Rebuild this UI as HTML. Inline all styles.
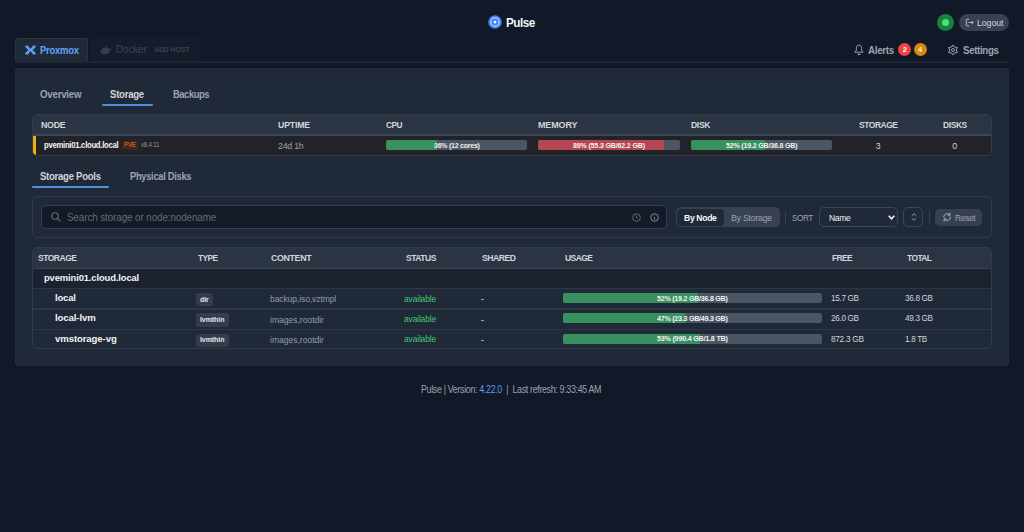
<!DOCTYPE html>
<html><head><meta charset="utf-8">
<style>
*{box-sizing:border-box;margin:0;padding:0}
html,body{width:1024px;height:532px;overflow:hidden}
body{background:#111827;font-family:"Liberation Sans",sans-serif;color:#e5e7eb;position:relative}
.a{position:absolute;white-space:nowrap}
.t{line-height:1}
svg.a{overflow:visible}
</style></head><body>
<svg class="a" style="left:488px;top:15px" width="14" height="14" viewBox="0 0 14 14"><circle cx="7" cy="7" r="6.8" fill="#3b82f6"/><circle cx="7" cy="7" r="4.2" fill="none" stroke="#dbeafe" stroke-width="1.1"/><circle cx="7" cy="7" r="1.5" fill="#eff6ff"/></svg>
<div class="a t" style="left:505.60px;top:16.40px;font-size:13px;font-weight:bold;color:#f3f4f6;letter-spacing:-0.555px;transform:scaleX(0.9056);transform-origin:0 0;">Pulse</div>
<div class="a" style="left:937px;top:14px;width:17px;height:17px;background:#1a803e;border-radius:50%"></div>
<div class="a" style="left:942px;top:19px;width:7px;height:7px;background:#4ade80;border-radius:50%"></div>
<div class="a" style="left:959.4px;top:14.2px;width:49.2px;height:16.8px;background:#374151;border-radius:9px"></div>
<svg class="a" style="left:965px;top:18px" width="9" height="9" viewBox="0 0 9 9" fill="none" stroke="#c4cad3" stroke-width="0.9"><path d="M4 1.2H2.2a.9.9 0 0 0-.9.9v4.8a.9.9 0 0 0 .9.9H4"/><path d="M3.6 4.5h4.6M6.6 2.9l1.6 1.6-1.6 1.6"/></svg>
<div class="a t" style="left:976.60px;top:19.18px;font-size:9px;color:#d1d5db;letter-spacing:-0.091px;transform:scaleX(0.9752);transform-origin:0 0;">Logout</div>
<div class="a" style="left:15.3px;top:38px;width:73px;height:25px;background:#1f2937;border:1px solid #2b3544;border-bottom:none;border-radius:3px 3px 0 0"></div>
<svg class="a" style="left:24.5px;top:44.8px" width="11" height="10" viewBox="0 0 11 10"><g stroke="#60a5fa" fill="none" stroke-linecap="round"><path d="M2.2 0.9L8.8 9.1M8.8 0.9L2.2 9.1" stroke-width="1.5"/><path d="M0.8 1.6L4.3 5 0.8 8.4M10.2 1.6L6.7 5l3.5 3.4" stroke-width="1.4"/></g></svg>
<div class="a t" style="left:39.70px;top:45.64px;font-size:10px;font-weight:bold;color:#60a5fa;letter-spacing:-0.260px;transform:scaleX(0.9458);transform-origin:0 0;">Proxmox</div>
<div class="a" style="left:90.3px;top:38px;width:109.7px;height:23px;background:#151c2a;border-radius:3px 3px 0 0"></div>
<svg class="a" style="left:99.5px;top:44.8px" width="11.5" height="9.5" viewBox="0 0 11.5 9.5"><path d="M0.2 5.2C0.2 8 2.3 9.3 4.6 9.3c3 0 5-1.6 5.6-3.9.6-.1 1.1-.5 1.3-1.1-.4-.3-1.1-.4-1.7-.1-.2-.6-.6-1-1-1.2l-.3.4V2.8H6.8V0.3H5.6v2.5H2.5v2.4z" fill="#353e4c"/></svg>
<div class="a t" style="left:115.50px;top:45.03px;font-size:10px;color:#3c4655;letter-spacing:-0.071px;transform:scaleX(0.9833);transform-origin:0 0;">Docker</div>
<div class="a t" style="left:154.00px;top:46.74px;font-size:6.8px;font-weight:bold;color:#394352;letter-spacing:-0.012px;transform:scaleX(0.9964);transform-origin:0 0;">ADD HOST</div>
<svg class="a" style="left:853.5px;top:43.6px" width="10" height="12" viewBox="0 0 10 12" fill="none" stroke="#9ca3af" stroke-width="1" stroke-linejoin="round"><path d="M5 1C2.9 1 2.4 2.8 2.4 4.4V6.2L0.9 8.2H9.1L7.6 6.2V4.4C7.6 2.8 7.1 1 5 1z"/><path d="M4 10.4H6" stroke-width="1.1" stroke-linecap="round"/></svg>
<div class="a t" style="left:868.30px;top:44.66px;font-size:10.8px;font-weight:bold;color:#9ca3af;letter-spacing:-0.378px;transform:scaleX(0.9088);transform-origin:0 0;">Alerts</div>
<div class="a" style="left:898.3px;top:43.3px;width:13px;height:13px;background:#ef4444;border-radius:50%"></div>
<div class="a t" style="left:902.71px;top:46.15px;font-size:7.5px;font-weight:bold;color:#fff;letter-spacing:0.000px;">2</div>
<div class="a" style="left:913.6px;top:43.3px;width:13px;height:13px;background:#d68a12;border-radius:50%"></div>
<div class="a t" style="left:918.01px;top:46.15px;font-size:7.5px;font-weight:bold;color:#fef3c7;letter-spacing:0.000px;">4</div>
<svg class="a" style="left:947px;top:43.6px" width="12" height="12" viewBox="0 0 12 12" fill="none" stroke="#9ca3af" stroke-width="1" stroke-linejoin="round"><polygon points="6.00,1.00 7.65,3.14 10.33,3.50 9.30,6.00 10.33,8.50 7.65,8.86 6.00,11.00 4.35,8.86 1.67,8.50 2.70,6.00 1.67,3.50 4.35,3.14"/><circle cx="6" cy="6" r="1.5"/></svg>
<div class="a t" style="left:963.20px;top:44.66px;font-size:10.8px;font-weight:bold;color:#9ca3af;letter-spacing:-0.397px;transform:scaleX(0.9039);transform-origin:0 0;">Settings</div>
<div class="a" style="left:15px;top:61px;width:994px;height:2px;background:#1e2636;"></div>
<div class="a" style="left:15.2px;top:67.6px;width:993.6px;height:298.2px;background:#1f2937;border-radius:2.5px;border:1px solid #222c3b;box-shadow:0 0 2px rgba(0,0,0,0.2)"></div>
<div class="a t" style="left:39.90px;top:90.08px;font-size:10.3px;font-weight:bold;color:#9ca3af;letter-spacing:-0.253px;transform:scaleX(0.9425);transform-origin:0 0;">Overview</div>
<div class="a t" style="left:110.10px;top:90.08px;font-size:10.3px;font-weight:bold;color:#d1d5db;letter-spacing:-0.290px;transform:scaleX(0.9328);transform-origin:0 0;">Storage</div>
<div class="a t" style="left:172.50px;top:90.08px;font-size:10.3px;font-weight:bold;color:#9ca3af;letter-spacing:-0.450px;transform:scaleX(0.9072);transform-origin:0 0;">Backups</div>
<div class="a" style="left:101.6px;top:104px;width:51.4px;height:2px;background:#5590e0;border-radius:1px"></div>
<div class="a" style="left:32px;top:113.8px;width:959.5px;height:42px;border:1px solid #323c4b;border-radius:5px;background:#2a3443;overflow:hidden"><div class="a" style="left:0;top:19.7px;width:958px;height:1.2px;background:#3b4554"></div><div class="a" style="left:0;top:20.9px;width:958px;height:19.3px;background:#212328"></div><div class="a" style="left:0;top:20.9px;width:3px;height:19.3px;background:#eab308"></div></div>
<div class="a t" style="left:41.00px;top:120.61px;font-size:9.2px;font-weight:bold;color:#d1d5db;letter-spacing:-0.249px;transform:scaleX(0.9581);transform-origin:0 0;">NODE</div>
<div class="a t" style="left:278.10px;top:120.61px;font-size:9.2px;font-weight:bold;color:#d1d5db;letter-spacing:-0.213px;transform:scaleX(0.9543);transform-origin:0 0;">UPTIME</div>
<div class="a t" style="left:385.50px;top:120.61px;font-size:9.2px;font-weight:bold;color:#d1d5db;letter-spacing:-0.614px;transform:scaleX(0.9067);transform-origin:0 0;">CPU</div>
<div class="a t" style="left:538.00px;top:120.61px;font-size:9.2px;font-weight:bold;color:#d1d5db;letter-spacing:-0.126px;transform:scaleX(0.9770);transform-origin:0 0;">MEMORY</div>
<div class="a t" style="left:691.00px;top:120.61px;font-size:9.2px;font-weight:bold;color:#d1d5db;letter-spacing:-0.343px;transform:scaleX(0.9307);transform-origin:0 0;">DISK</div>
<div class="a t" style="left:858.90px;top:120.61px;font-size:9.2px;font-weight:bold;color:#d1d5db;letter-spacing:-0.441px;transform:scaleX(0.9138);transform-origin:0 0;">STORAGE</div>
<div class="a t" style="left:942.60px;top:120.61px;font-size:9.2px;font-weight:bold;color:#d1d5db;letter-spacing:-0.409px;transform:scaleX(0.9139);transform-origin:0 0;">DISKS</div>
<div class="a t" style="left:43.90px;top:141.22px;font-size:8.6px;font-weight:bold;color:#f3f4f6;letter-spacing:-0.309px;transform:scaleX(0.8980);transform-origin:0 0;">pvemini01.cloud.local</div>
<div class="a" style="left:121.75px;top:140.5px;width:16.25px;height:9.2px;background:#3a2722;border-radius:2px"></div>
<div class="a t" style="left:123.90px;top:141.84px;font-size:6.8px;color:#f97316;letter-spacing:-0.334px;transform:scaleX(0.9274);transform-origin:0 0;">PVE</div>
<div class="a t" style="left:140.75px;top:141.84px;font-size:6.8px;color:#8b93a0;letter-spacing:-0.231px;transform:scaleX(0.9062);transform-origin:0 0;">v8.4.11</div>
<div class="a t" style="left:277.75px;top:141.53px;font-size:9.3px;color:#9ca3af;letter-spacing:-0.222px;transform:scaleX(0.9420);transform-origin:0 0;">24d 1h</div>
<div class="a" style="left:386px;top:140.25px;width:141px;height:9.75px;background:#4b5563;border-radius:2px"></div>
<div class="a" style="left:386px;top:140.25px;width:50.76px;height:9.75px;background:#3a9160;border-radius:2px 0 0 2px"></div>
<div class="a t" style="left:433.55px;top:141.95px;font-size:7.5px;font-weight:bold;color:#f3f4f6;letter-spacing:-0.212px;transform:scaleX(0.9222);transform-origin:0 0;font-weight:600">36% (12 cores)</div>
<div class="a" style="left:538px;top:140.25px;width:141.5px;height:9.75px;background:#4b5563;border-radius:2px"></div>
<div class="a" style="left:538px;top:140.25px;width:125.94px;height:9.75px;background:#b4474f;border-radius:2px 0 0 2px"></div>
<div class="a t" style="left:572.75px;top:141.95px;font-size:7.5px;font-weight:bold;color:#f3f4f6;letter-spacing:-0.166px;transform:scaleX(0.9385);transform-origin:0 0;font-weight:600">89% (55.3 GB/62.2 GB)</div>
<div class="a" style="left:691px;top:140.25px;width:141.4px;height:9.75px;background:#4b5563;border-radius:2px"></div>
<div class="a" style="left:691px;top:140.25px;width:73.53px;height:9.75px;background:#3a9160;border-radius:2px 0 0 2px"></div>
<div class="a t" style="left:725.90px;top:141.95px;font-size:7.5px;font-weight:bold;color:#f3f4f6;letter-spacing:-0.174px;transform:scaleX(0.9354);transform-origin:0 0;font-weight:600">52% (19.2 GB/36.8 GB)</div>
<div class="a t" style="left:875.85px;top:141.95px;font-size:8.8px;color:#d1d5db;letter-spacing:0.000px;">3</div>
<div class="a t" style="left:952.35px;top:141.95px;font-size:8.8px;color:#d1d5db;letter-spacing:0.000px;">0</div>
<div class="a t" style="left:40.40px;top:172.18px;font-size:10.3px;font-weight:bold;color:#d1d5db;letter-spacing:-0.286px;transform:scaleX(0.9267);transform-origin:0 0;">Storage Pools</div>
<div class="a t" style="left:129.50px;top:172.18px;font-size:10.3px;font-weight:bold;color:#9ca3af;letter-spacing:-0.343px;transform:scaleX(0.9087);transform-origin:0 0;">Physical Disks</div>
<div class="a" style="left:32px;top:186.1px;width:77.4px;height:2px;background:#5590e0;border-radius:1px"></div>
<div class="a" style="left:32px;top:196.2px;width:959.5px;height:42.2px;background:transparent;border:1px solid #2f3947;border-radius:5px"></div>
<div class="a" style="left:41.2px;top:205.1px;width:625.5px;height:23.6px;background:#131a28;border:1px solid #353f4e;border-radius:5px"></div>
<svg class="a" style="left:50.5px;top:212.3px" width="10" height="10" viewBox="0 0 10 10" fill="none" stroke="#6b7280" stroke-width="1.1"><circle cx="4" cy="4" r="3.2"/><path d="M6.4 6.4L9.3 9.3"/></svg>
<div class="a t" style="left:66.90px;top:212.63px;font-size:10px;color:#656c79;letter-spacing:-0.072px;transform:scaleX(0.9791);transform-origin:0 0;">Search storage or node:nodename</div>
<svg class="a" style="left:631.8px;top:213px" width="9" height="9" viewBox="0 0 9 9" fill="none" stroke="#6b7280" stroke-width="0.9"><circle cx="4.5" cy="4.5" r="3.8"/><path d="M4.5 2.4v2.2l1.4 1"/></svg>
<svg class="a" style="left:649.8px;top:213px" width="9" height="9" viewBox="0 0 9 9" fill="none" stroke="#8f96a2" stroke-width="0.9"><circle cx="4.5" cy="4.5" r="3.8"/><path d="M4.5 4.2v2.4"/><circle cx="4.5" cy="2.7" r="0.45" fill="#8f96a2" stroke="none"/></svg>
<div class="a" style="left:675.75px;top:207.25px;width:104px;height:19.65px;background:#374151;border-radius:5px"></div>
<div class="a" style="left:677px;top:208.75px;width:46.9px;height:16.85px;background:#1f2937;border-radius:4px"></div>
<div class="a t" style="left:684.10px;top:213.06px;font-size:9.5px;font-weight:bold;color:#f9fafb;letter-spacing:-0.393px;transform:scaleX(0.9095);transform-origin:0 0;">By Node</div>
<div class="a t" style="left:730.75px;top:213.06px;font-size:9.5px;color:#9ca3af;letter-spacing:-0.266px;transform:scaleX(0.9247);transform-origin:0 0;">By Storage</div>
<div class="a" style="left:785.1px;top:210.6px;width:1px;height:13px;background:#374151;"></div>
<div class="a t" style="left:791.80px;top:214.08px;font-size:9px;color:#9ca3af;letter-spacing:-0.508px;transform:scaleX(0.9094);transform-origin:0 0;">SORT</div>
<div class="a" style="left:819px;top:207.1px;width:78.75px;height:19.8px;background:#1f2937;border:1px solid #3d4757;border-radius:5px"></div>
<div class="a t" style="left:828.75px;top:214.08px;font-size:9px;color:#f3f4f6;letter-spacing:-0.296px;transform:scaleX(0.9451);transform-origin:0 0;">Name</div>
<svg class="a" style="left:888px;top:215px" width="7" height="5" viewBox="0 0 7 5" fill="none" stroke="#f3f4f6" stroke-width="1.6"><path d="M0.7 0.8L3.5 3.8 6.3 0.8"/></svg>
<div class="a" style="left:903.1px;top:207px;width:20px;height:20px;background:transparent;border:1px solid #3d4757;border-radius:5px"></div>
<svg class="a" style="left:910.6px;top:213.3px" width="6" height="8" viewBox="0 0 6 8" fill="none" stroke="#9ca3af" stroke-width="0.9"><path d="M0.8 2.8L3 0.7 5.2 2.8M0.8 5.2L3 7.3 5.2 5.2"/></svg>
<div class="a" style="left:928.7px;top:210px;width:1px;height:14px;background:#374151;"></div>
<div class="a" style="left:934.9px;top:208.8px;width:47.5px;height:17px;background:#364050;border-radius:5px"></div>
<svg class="a" style="left:941.7px;top:212.3px" width="10.2" height="10.2" viewBox="0 0 24 24" fill="none" stroke="#aeb4bd" stroke-width="2.2" stroke-linecap="round"><path d="M20 12a8 8 0 0 1-14.5 4.7M4 12A8 8 0 0 1 18.5 7.3"/><path d="M19 2.5v5h-5M5 21.5v-5h5"/></svg>
<div class="a t" style="left:954.70px;top:213.93px;font-size:9.3px;color:#9ca3af;letter-spacing:-0.393px;transform:scaleX(0.9044);transform-origin:0 0;">Reset</div>
<div class="a" style="left:32px;top:246.8px;width:959.5px;height:102.2px;border:1px solid #313b4a;border-radius:5px;background:#1f2937;overflow:hidden"><div class="a" style="left:0;top:0;width:958px;height:20px;background:#2a3443"></div><div class="a" style="left:0;top:20px;width:958px;height:1.5px;background:#3b4554"></div><div class="a" style="left:0;top:21.5px;width:958px;height:18.8px;background:#1b2230"></div><div class="a" style="left:0;top:40.3px;width:958px;height:1.2px;background:#2d3746"></div><div class="a" style="left:0;top:60.6px;width:958px;height:1.2px;background:#2d3746"></div><div class="a" style="left:0;top:81px;width:958px;height:1.2px;background:#2d3746"></div></div>
<div class="a t" style="left:38.00px;top:252.77px;font-size:9.6px;font-weight:bold;color:#d1d5db;letter-spacing:-0.585px;transform:scaleX(0.8907);transform-origin:0 0;">STORAGE</div>
<div class="a t" style="left:198.10px;top:252.77px;font-size:9.6px;font-weight:bold;color:#d1d5db;letter-spacing:-0.723px;transform:scaleX(0.8731);transform-origin:0 0;">TYPE</div>
<div class="a t" style="left:271.25px;top:252.77px;font-size:9.6px;font-weight:bold;color:#d1d5db;letter-spacing:-0.402px;transform:scaleX(0.9230);transform-origin:0 0;">CONTENT</div>
<div class="a t" style="left:405.80px;top:252.77px;font-size:9.6px;font-weight:bold;color:#d1d5db;letter-spacing:-0.548px;transform:scaleX(0.8909);transform-origin:0 0;">STATUS</div>
<div class="a t" style="left:482.20px;top:252.77px;font-size:9.6px;font-weight:bold;color:#d1d5db;letter-spacing:-0.551px;transform:scaleX(0.8999);transform-origin:0 0;">SHARED</div>
<div class="a t" style="left:564.70px;top:252.77px;font-size:9.6px;font-weight:bold;color:#d1d5db;letter-spacing:-0.651px;transform:scaleX(0.8879);transform-origin:0 0;">USAGE</div>
<div class="a t" style="left:832.20px;top:252.77px;font-size:9.6px;font-weight:bold;color:#d1d5db;letter-spacing:-0.726px;transform:scaleX(0.8751);transform-origin:0 0;">FREE</div>
<div class="a t" style="left:906.60px;top:252.77px;font-size:9.6px;font-weight:bold;color:#d1d5db;letter-spacing:-0.651px;transform:scaleX(0.8771);transform-origin:0 0;">TOTAL</div>
<div class="a t" style="left:43.90px;top:272.69px;font-size:9.7px;font-weight:bold;color:#f3f4f6;letter-spacing:-0.111px;transform:scaleX(0.9672);transform-origin:0 0;">pvemini01.cloud.local</div>
<div class="a t" style="left:55.10px;top:292.92px;font-size:9.9px;font-weight:bold;color:#f3f4f6;letter-spacing:-0.170px;transform:scaleX(0.9552);transform-origin:0 0;">local</div>
<div class="a" style="left:196.25px;top:293.0px;width:17px;height:13.3px;background:#343d4b;border-radius:3px"></div>
<div class="a t" style="left:200.35px;top:295.61px;font-size:7.2px;font-weight:bold;color:#e5e7eb;letter-spacing:-0.081px;transform:scaleX(0.9737);transform-origin:0 0;">dir</div>
<div class="a t" style="left:270.20px;top:295.32px;font-size:8.6px;color:#959ca8;letter-spacing:-0.054px;transform:scaleX(0.9810);transform-origin:0 0;">backup,iso,vztmpl</div>
<div class="a t" style="left:404.10px;top:294.68px;font-size:9px;color:#42c872;letter-spacing:-0.174px;transform:scaleX(0.9419);transform-origin:0 0;">available</div>
<div class="a" style="left:481px;top:299.3px;width:3px;height:1px;background:#9ca3af;"></div>
<div class="a" style="left:563px;top:293.0px;width:259px;height:10px;background:#4b5563;border-radius:2px"></div>
<div class="a" style="left:563px;top:293.0px;width:134.68px;height:10px;background:#3a9160;border-radius:2px 0 0 2px"></div>
<div class="a t" style="left:657.05px;top:294.50px;font-size:7.8px;font-weight:bold;color:#f3f4f6;letter-spacing:-0.259px;transform:scaleX(0.9082);transform-origin:0 0;font-weight:600">52% (19.2 GB/36.8 GB)</div>
<div class="a t" style="left:831.30px;top:294.08px;font-size:9px;color:#d1d5db;letter-spacing:-0.351px;transform:scaleX(0.9058);transform-origin:0 0;">15.7 GB</div>
<div class="a t" style="left:905.40px;top:294.08px;font-size:9px;color:#d1d5db;letter-spacing:-0.351px;transform:scaleX(0.9058);transform-origin:0 0;">36.8 GB</div>
<div class="a t" style="left:55.10px;top:313.22px;font-size:9.9px;font-weight:bold;color:#f3f4f6;letter-spacing:-0.102px;transform:scaleX(0.9715);transform-origin:0 0;">local-lvm</div>
<div class="a" style="left:196.25px;top:313.3px;width:32.25px;height:13.3px;background:#343d4b;border-radius:3px"></div>
<div class="a t" style="left:200.12px;top:315.91px;font-size:7.2px;font-weight:bold;color:#e5e7eb;letter-spacing:-0.074px;transform:scaleX(0.9740);transform-origin:0 0;">lvmthin</div>
<div class="a t" style="left:270.20px;top:315.62px;font-size:8.6px;color:#959ca8;letter-spacing:-0.015px;transform:scaleX(0.9946);transform-origin:0 0;">images,rootdir</div>
<div class="a t" style="left:404.10px;top:314.98px;font-size:9px;color:#42c872;letter-spacing:-0.174px;transform:scaleX(0.9419);transform-origin:0 0;">available</div>
<div class="a" style="left:481px;top:319.6px;width:3px;height:1px;background:#9ca3af;"></div>
<div class="a" style="left:563px;top:313.3px;width:259px;height:10px;background:#4b5563;border-radius:2px"></div>
<div class="a" style="left:563px;top:313.3px;width:121.73px;height:10px;background:#3a9160;border-radius:2px 0 0 2px"></div>
<div class="a t" style="left:657.05px;top:314.80px;font-size:7.8px;font-weight:bold;color:#f3f4f6;letter-spacing:-0.259px;transform:scaleX(0.9082);transform-origin:0 0;font-weight:600">47% (23.3 GB/49.3 GB)</div>
<div class="a t" style="left:831.30px;top:314.38px;font-size:9px;color:#d1d5db;letter-spacing:-0.351px;transform:scaleX(0.9058);transform-origin:0 0;">26.0 GB</div>
<div class="a t" style="left:905.40px;top:314.38px;font-size:9px;color:#d1d5db;letter-spacing:-0.351px;transform:scaleX(0.9058);transform-origin:0 0;">49.3 GB</div>
<div class="a t" style="left:55.10px;top:333.52px;font-size:9.9px;font-weight:bold;color:#f3f4f6;letter-spacing:-0.111px;transform:scaleX(0.9718);transform-origin:0 0;">vmstorage-vg</div>
<div class="a" style="left:196.25px;top:333.6px;width:32.25px;height:13.3px;background:#343d4b;border-radius:3px"></div>
<div class="a t" style="left:200.12px;top:336.21px;font-size:7.2px;font-weight:bold;color:#e5e7eb;letter-spacing:-0.074px;transform:scaleX(0.9740);transform-origin:0 0;">lvmthin</div>
<div class="a t" style="left:270.20px;top:335.92px;font-size:8.6px;color:#959ca8;letter-spacing:-0.015px;transform:scaleX(0.9946);transform-origin:0 0;">images,rootdir</div>
<div class="a t" style="left:404.10px;top:335.28px;font-size:9px;color:#42c872;letter-spacing:-0.174px;transform:scaleX(0.9419);transform-origin:0 0;">available</div>
<div class="a" style="left:481px;top:339.90000000000003px;width:3px;height:1px;background:#9ca3af;"></div>
<div class="a" style="left:563px;top:333.6px;width:259px;height:10px;background:#4b5563;border-radius:2px"></div>
<div class="a" style="left:563px;top:333.6px;width:137.27px;height:10px;background:#3a9160;border-radius:2px 0 0 2px"></div>
<div class="a t" style="left:657.05px;top:335.10px;font-size:7.8px;font-weight:bold;color:#f3f4f6;letter-spacing:-0.230px;transform:scaleX(0.9169);transform-origin:0 0;font-weight:600">53% (990.4 GB/1.8 TB)</div>
<div class="a t" style="left:831.30px;top:334.68px;font-size:9px;color:#d1d5db;letter-spacing:-0.306px;transform:scaleX(0.9168);transform-origin:0 0;">872.3 GB</div>
<div class="a t" style="left:905.40px;top:334.68px;font-size:9px;color:#d1d5db;letter-spacing:-0.349px;transform:scaleX(0.9023);transform-origin:0 0;">1.8 TB</div>
<div class="a t" style="left:421.25px;top:384.87px;font-size:10.2px;color:#9ca3af;letter-spacing:-0.388px;transform:scaleX(0.8722);transform-origin:0 0;">Pulse | Version: <span style="color:#5b9ef0">4.22.0</span> &nbsp;| &nbsp;Last refresh: 9:33:45 AM</div>
</body></html>
